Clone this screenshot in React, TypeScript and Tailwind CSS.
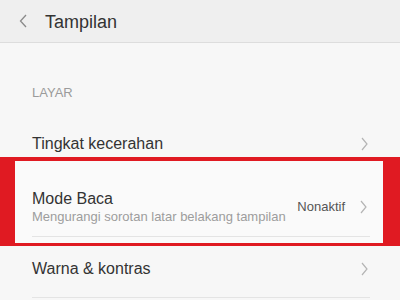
const Chevron = () => (
  <svg width="8" height="14" viewBox="0 0 8 14" className="shrink-0">
    <path d="M2 1 L7 7 L2 13" fill="none" stroke="#b4b4b4" strokeWidth="1.2" />
  </svg>
);

const App = () => {
  return (
    <div
      className="h-[300px] w-[400px] overflow-hidden bg-[#f7f7f7] text-[#333]"
      style={{ fontFamily: '"Liberation Sans", Arial, sans-serif' }}
    >
      <header className="flex h-[43px] items-center border-b border-[#dddddd] bg-[#efefef] pl-[19px]">
        <svg width="8" height="14" viewBox="0 0 8 14" className="shrink-0">
          <path d="M7 1 L1.5 7 L7 13" fill="none" stroke="#8a8a8a" strokeWidth="1.3" />
        </svg>
        <h1 className="ml-[18px] pt-[1px] text-[18px] leading-[22px] text-[#333]">Tampilan</h1>
      </header>

      <div className="px-[32px] pt-[42px] text-[13px] leading-[16px] text-[#9b9b9b]">LAYAR</div>

      <div className="flex items-center justify-between px-[32px] pt-[33px] pb-[3px]">
        <span className="text-[16px] leading-[20px]">Tingkat kecerahan</span>
        <Chevron />
      </div>

      <div className="border-t-[4px] border-r-[17px] border-b-[3px] border-l-[15px] border-[#e01a22] bg-[#fafafa]">
        <div className="flex items-center justify-between pt-[28px] pr-[16px] pl-[17px]">
          <div>
            <div className="text-[16px] leading-[20px]">Mode Baca</div>
            <div className="text-[13px] leading-[16px] text-[#9d9d9d]">
              Mengurangi sorotan latar belakang tampilan
            </div>
          </div>
          <div className="flex items-center gap-[14px]">
            <span className="text-[13px] leading-[16px] text-[#555]">Nonaktif</span>
            <Chevron />
          </div>
        </div>
        <div className="mt-[11px] mr-[13px] ml-[17px] h-px bg-[#e4e4e4]" />
        <div className="h-[6px]" />
      </div>

      <div className="flex items-center justify-between px-[32px] pt-[13px]">
        <span className="text-[16px] leading-[20px]">Warna &amp; kontras</span>
        <Chevron />
      </div>
      <div className="mt-[18px] mr-[30px] ml-[32px] h-px bg-[#e4e4e4]" />
    </div>
  );
};

export default App;
